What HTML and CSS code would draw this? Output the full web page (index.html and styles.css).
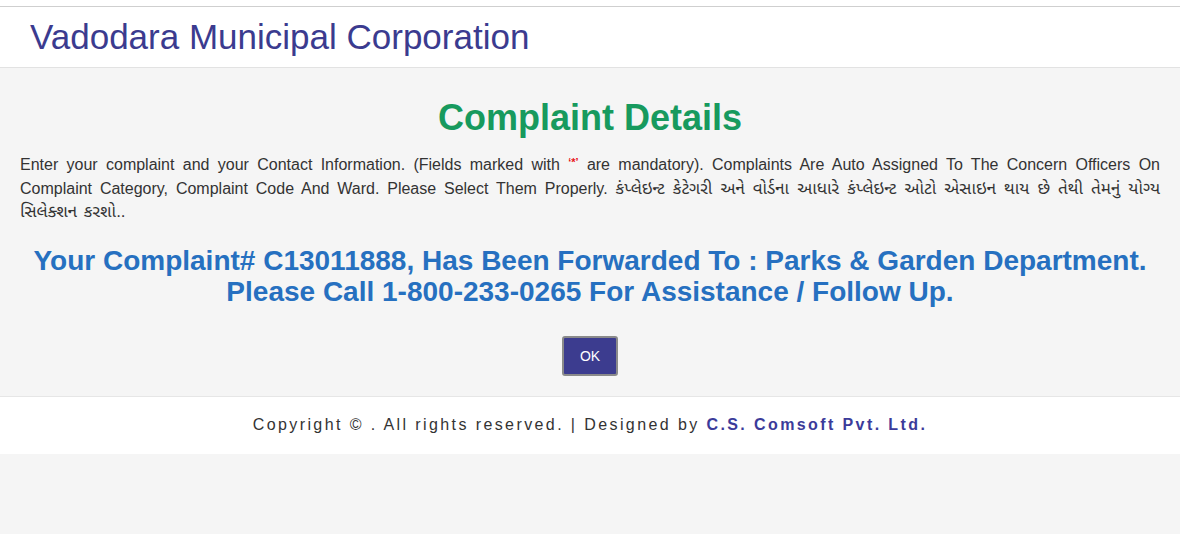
FILE: index.html
```html
<!DOCTYPE html>
<html>
<head>
<meta charset="utf-8">
<title>Complaint Details</title>
<link rel="stylesheet" href="styles.css">
</head>
<body>
<div class="page">
  <header class="site-header">
    <h1 class="site-title">Vadodara Municipal Corporation</h1>
  </header>
  <main class="content">
    <h2 class="page-title">Complaint Details</h2>
    <p class="intro">Enter your complaint and your Contact Information. (Fields marked with <span class="req">‘*’</span> are mandatory). Complaints Are Auto Assigned To The Concern Officers On Complaint Category, Complaint Code And Ward. Please Select Them Properly. <span class="guj">કંપ્લેઇન્ટ કેટેગરી અને વોર્ડના આધારે કંપ્લેઇન્ટ ઓટો એસાઇન થાય છે તેથી તેમનું યોગ્ય સિલેક્શન કરશો..</span></p>
    <p class="message">Your Complaint# C13011888, Has Been Forwarded To : Parks &amp; Garden Department.<br>Please Call 1-800-233-0265 For Assistance / Follow Up.</p>
    <div class="actions">
      <button class="btn-ok" type="button">OK</button>
    </div>
  </main>
  <footer class="site-footer">
    <p class="copy">Copyright © . All rights reserved. | Designed by <span class="brand">C.S. Comsoft Pvt. Ltd.</span></p>
  </footer>
</div>
</body>
</html>
```

FILE: styles.css
```css
html, body {
  margin: 0;
  padding: 0;
}
body {
  background: #f5f5f5;
  font-family: "Liberation Sans", Arial, "Noto Sans Gujarati", sans-serif;
  color: #333;
}
.page {
  padding-top: 6px;
  background: #fff;
}
.site-header {
  background: #fff;
  border-top: 1px solid #cfcfcf;
  border-bottom: 1px solid #e2e2e2;
  height: 60px;
  display: flex;
  align-items: center;
  padding-left: 30px;
}
.site-title {
  margin: 0;
  font-weight: normal;
  font-size: 35px;
  color: #3b3b8f;
  line-height: 1;
  padding-bottom: 1px;
}
.content {
  background: #f5f5f5;
  padding: 29px 20px 20px;
  border-bottom: 1px solid #e6e6e6;
}
.page-title {
  margin: 0;
  text-align: center;
  font-size: 36px;
  font-weight: bold;
  color: #179a5e;
  line-height: 42px;
}
.intro {
  margin: 12px 0 0;
  font-size: 16px;
  line-height: 23.5px;
  word-spacing: 2px;
  text-align: justify;
  color: #333;
}
.guj {
  font-size: 17px;
}
.req {
  color: #e8141a;
  font-size: 11px;
  font-weight: bold;
  vertical-align: 4px;
  word-spacing: 0;
}
.message {
  margin: 21px 0 0;
  text-align: center;
  font-size: 28px;
  font-weight: bold;
  line-height: 31px;
  color: #2670c0;
}
.actions {
  display: flex;
  justify-content: center;
  margin-top: 29px;
}
.btn-ok {
  width: 56px;
  height: 40px;
  background: #3c3c8f;
  color: #fff;
  border: 2px solid #8a8a8a;
  border-radius: 3px;
  font-family: "Liberation Sans", Arial, sans-serif;
  font-size: 14px;
  padding: 0;
}
.site-footer {
  background: #fff;
  height: 57px;
  display: flex;
  align-items: center;
  justify-content: center;
}
.copy {
  margin: 0;
  font-size: 16px;
  letter-spacing: 2.4px;
  color: #333;
}
.brand {
  color: #3b3b9a;
  font-weight: bold;
}
```
